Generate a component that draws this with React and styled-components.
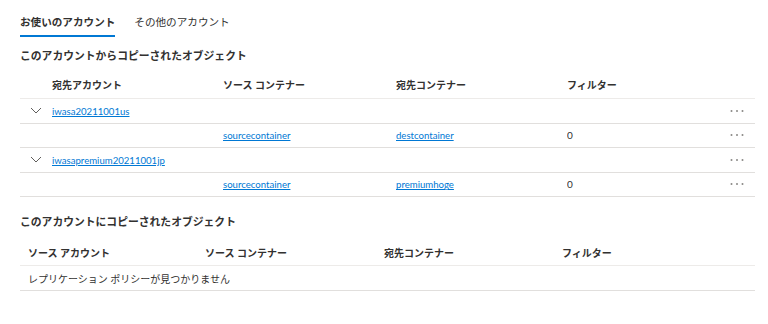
import React, { useState } from 'react';
import styled, { createGlobalStyle } from 'styled-components';

const GlobalStyle = createGlobalStyle`
    html, body {
        margin: 0;
        padding: 0;
        background: #ffffff;
    }
    body {
        font-family: "Lato", "Noto Sans CJK JP", sans-serif;
        font-size: 10px;
        color: #323130;
    }
`;

const Page = styled.div`
    padding: 7px 13px 0 20px;
`;

const Tabs = styled.div`
    display: flex;
    gap: 19px;
`;

const Tab = styled.div`
    padding: 8px 0 6px;
    font-size: 10.6px;
    line-height: 14px;
    font-weight: ${p => (p.$active ? 600 : 400)};
    border-bottom: 2px solid ${p => (p.$active ? '#0078d4' : 'transparent')};
    cursor: pointer;
`;

const SectionTitle = styled.h2`
    margin: ${p => p.$top}px 0 0;
    font-size: 10.8px;
    line-height: 16px;
    font-weight: 700;
`;

const Table = styled.div`
    display: flex;
    flex-direction: column;
    margin-top: ${p => p.$top}px;
`;

const HeaderRow = styled.div`
    display: flex;
    align-items: center;
    height: ${p => p.$h}px;
    box-sizing: border-box;
    border-bottom: 1px solid #edebe9;
    font-weight: 600;
`;

const Row = styled.div`
    display: flex;
    align-items: center;
    height: ${p => p.$h}px;
    box-sizing: border-box;
    border-bottom: 1px solid #e1dfdd;
`;

const Cell = styled.div`
    flex: 0 0 ${p => p.$w}px;
    box-sizing: border-box;
    padding-left: ${p => p.$pad || 0}px;
    overflow: hidden;
    white-space: nowrap;
    text-overflow: ellipsis;
`;

const Spacer = styled.div`
    flex: 1;
`;

const ExpandCell = styled.div`
    flex: 0 0 32px;
    display: flex;
    align-items: center;
    padding-left: 10px;
    box-sizing: border-box;
`;

const Link = styled.a`
    font-size: 9.6px;
    color: #0078d4;
    text-decoration: underline;
    cursor: pointer;
`;

const MoreButton = styled.div`
    flex: 0 0 25px;
    display: flex;
    align-items: center;
    height: 100%;
`;

const Chevron = () => (
    <svg width="12" height="7" viewBox="0 0 12 7">
        <path d="M1 1 L6 6 L11 1" fill="none" stroke="#605e5c" strokeWidth="1" />
    </svg>
);

const Dots = () => (
    <svg width="14" height="4" viewBox="0 0 14 4">
        <circle cx="1.5" cy="2" r="1" fill="#8a8886" />
        <circle cx="7" cy="2" r="1" fill="#8a8886" />
        <circle cx="12.5" cy="2" r="1" fill="#8a8886" />
    </svg>
);

const rules = [
    { account: 'iwasa20211001us', source: 'sourcecontainer', dest: 'destcontainer', filter: '0' },
    { account: 'iwasapremium20211001jp', source: 'sourcecontainer', dest: 'premiumhoge', filter: '0' },
];

const App = () => {
    const [tab, setTab] = useState(0);

    return (
        <Page>
            <GlobalStyle />
            <Tabs>
                <Tab $active={tab === 0} onClick={() => setTab(0)}>お使いのアカウント</Tab>
                <Tab $active={tab === 1} onClick={() => setTab(1)}>その他のアカウント</Tab>
            </Tabs>

            <SectionTitle $top={11}>このアカウントからコピーされたオブジェクト</SectionTitle>
            <Table $top={7}>
                <HeaderRow $h={28}>
                    <Cell $w={32} />
                    <Cell $w={171}>宛先アカウント</Cell>
                    <Cell $w={173}>ソース コンテナー</Cell>
                    <Cell $w={171}>宛先コンテナー</Cell>
                    <Cell $w={100}>フィルター</Cell>
                </HeaderRow>
                {rules.map((rule, index) => (
                    <React.Fragment key={`${index} ${rule.account}`}>
                        <Row $h={24.5}>
                            <ExpandCell><Chevron /></ExpandCell>
                            <Cell $w={171}><Link>{rule.account}</Link></Cell>
                            <Spacer />
                            <MoreButton><Dots /></MoreButton>
                        </Row>
                        <Row $h={24.5}>
                            <Cell $w={32} />
                            <Cell $w={171} />
                            <Cell $w={173}><Link>{rule.source}</Link></Cell>
                            <Cell $w={171}><Link>{rule.dest}</Link></Cell>
                            <Cell $w={100}>{rule.filter}</Cell>
                            <Spacer />
                            <MoreButton><Dots /></MoreButton>
                        </Row>
                    </React.Fragment>
                ))}
            </Table>

            <SectionTitle $top={17}>このアカウントにコピーされたオブジェクト</SectionTitle>
            <Table $top={9}>
                <HeaderRow $h={27}>
                    <Cell $w={185} $pad={8}>ソース アカウント</Cell>
                    <Cell $w={179}>ソース コンテナー</Cell>
                    <Cell $w={178}>宛先コンテナー</Cell>
                    <Cell $w={100}>フィルター</Cell>
                </HeaderRow>
                <Row $h={25}>
                    <Cell $w={400} $pad={8}>レプリケーション ポリシーが見つかりません</Cell>
                </Row>
            </Table>
        </Page>
    );
};

export default App;
